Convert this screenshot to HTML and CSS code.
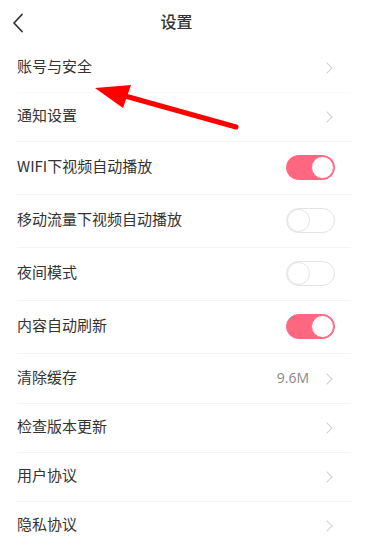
FILE: index.html
```html
<!DOCTYPE html>
<html lang="zh-CN">
<head>
  <meta charset="UTF-8" />
  <meta name="viewport" content="width=device-width, initial-scale=1.0"/>
  <title>设置</title>
  <link rel="stylesheet" href="styles.css">
</head>
<body>

  <div class="header">
    <svg class="back" width="12" height="20" viewBox="0 0 12 20">
      <path d="M10 1.5 L2 10 L10 18.5" fill="none" stroke="#333" stroke-width="1.8" stroke-linecap="round" stroke-linejoin="round"/>
    </svg>
    <div class="title">设置</div>
  </div>

  <div class="list">
    <div class="row first"><span class="label">账号与安全</span><span class="chev"></span></div>
    <div class="row"><span class="label">通知设置</span><span class="chev"></span></div>
    <div class="row tall"><span class="label">WIFI下视频自动播放</span><span class="switch on"></span></div>
    <div class="row tall"><span class="label">移动流量下视频自动播放</span><span class="switch"></span></div>
    <div class="row tall"><span class="label">夜间模式</span><span class="switch"></span></div>
    <div class="row tall"><span class="label">内容自动刷新</span><span class="switch on"></span></div>
    <div class="row mid"><span class="label">清除缓存</span><span class="value">9.6M</span><span class="chev"></span></div>
    <div class="row"><span class="label">检查版本更新</span><span class="chev"></span></div>
    <div class="row"><span class="label">用户协议</span><span class="chev"></span></div>
    <div class="row"><span class="label">隐私协议</span><span class="chev"></span></div>
  </div>

  <!-- annotation arrow -->
  <svg class="pointer" width="367" height="545" viewBox="0 0 367 545">
    <line x1="236" y1="127" x2="118" y2="94" stroke="#ff0000" stroke-width="5" stroke-linecap="round"/>
    <polygon points="95,88 131,85 123,108" fill="#ff0000"/>
  </svg>

</body>
</html>
```

FILE: styles.css
```css
body {
  margin: 0;
  background: #fff;
  font-family: "Noto Sans CJK SC", "Noto Sans", sans-serif;
  color: #333;
  position: relative;
}

.header {
  height: 44px;
  display: flex;
  align-items: center;
  justify-content: center;
  padding-right: 14px;
  position: relative;
}

.back {
  position: absolute;
  left: 12px;
  top: 13px;
}

.title {
  font-size: 16px;
  font-weight: 500;
  color: #333;
  padding-bottom: 2px;
}

.list {
  margin: 0 16px 0 17px;
}

.row {
  height: 48px;
  display: flex;
  align-items: center;
  border-bottom: 1px solid #f4f4f4;
  padding-right: 17px;
}

.row.first {
  border-bottom-color: #fafafa;
}

.row.tall {
  height: 52px;
}

.row.mid {
  height: 49px;
}

.label {
  flex: 1;
  font-size: 15px;
  color: #333;
  padding-bottom: 5px;
}

.value {
  font-size: 14px;
  color: #888;
  margin-right: 14px;
  padding-bottom: 2px;
  font-family: "Open Sans", "Noto Sans", sans-serif;
}

.chev {
  width: 7px;
  height: 7px;
  border-top: 1.2px solid #d0d0d0;
  border-right: 1.2px solid #d0d0d0;
  transform: rotate(45deg);
  margin-right: 3px;
}

.switch {
  width: 47px;
  height: 23px;
  border: 1px solid #e3e3e8;
  border-radius: 13px;
  background: #fff;
  position: relative;
  margin-right: -1px;
  margin-bottom: 2px;
}

.switch::after {
  content: "";
  position: absolute;
  left: 0;
  top: 0;
  width: 21px;
  height: 21px;
  border: 1px solid #e3e3e8;
  border-radius: 50%;
  background: #fff;
}

.switch.on {
  background: #ff6680;
  border-color: #ff6680;
}

.switch.on::after {
  left: auto;
  right: 0;
  border-color: #ff6680;
}

.pointer {
  position: absolute;
  left: 0;
  top: 0;
  pointer-events: none;
}
```
